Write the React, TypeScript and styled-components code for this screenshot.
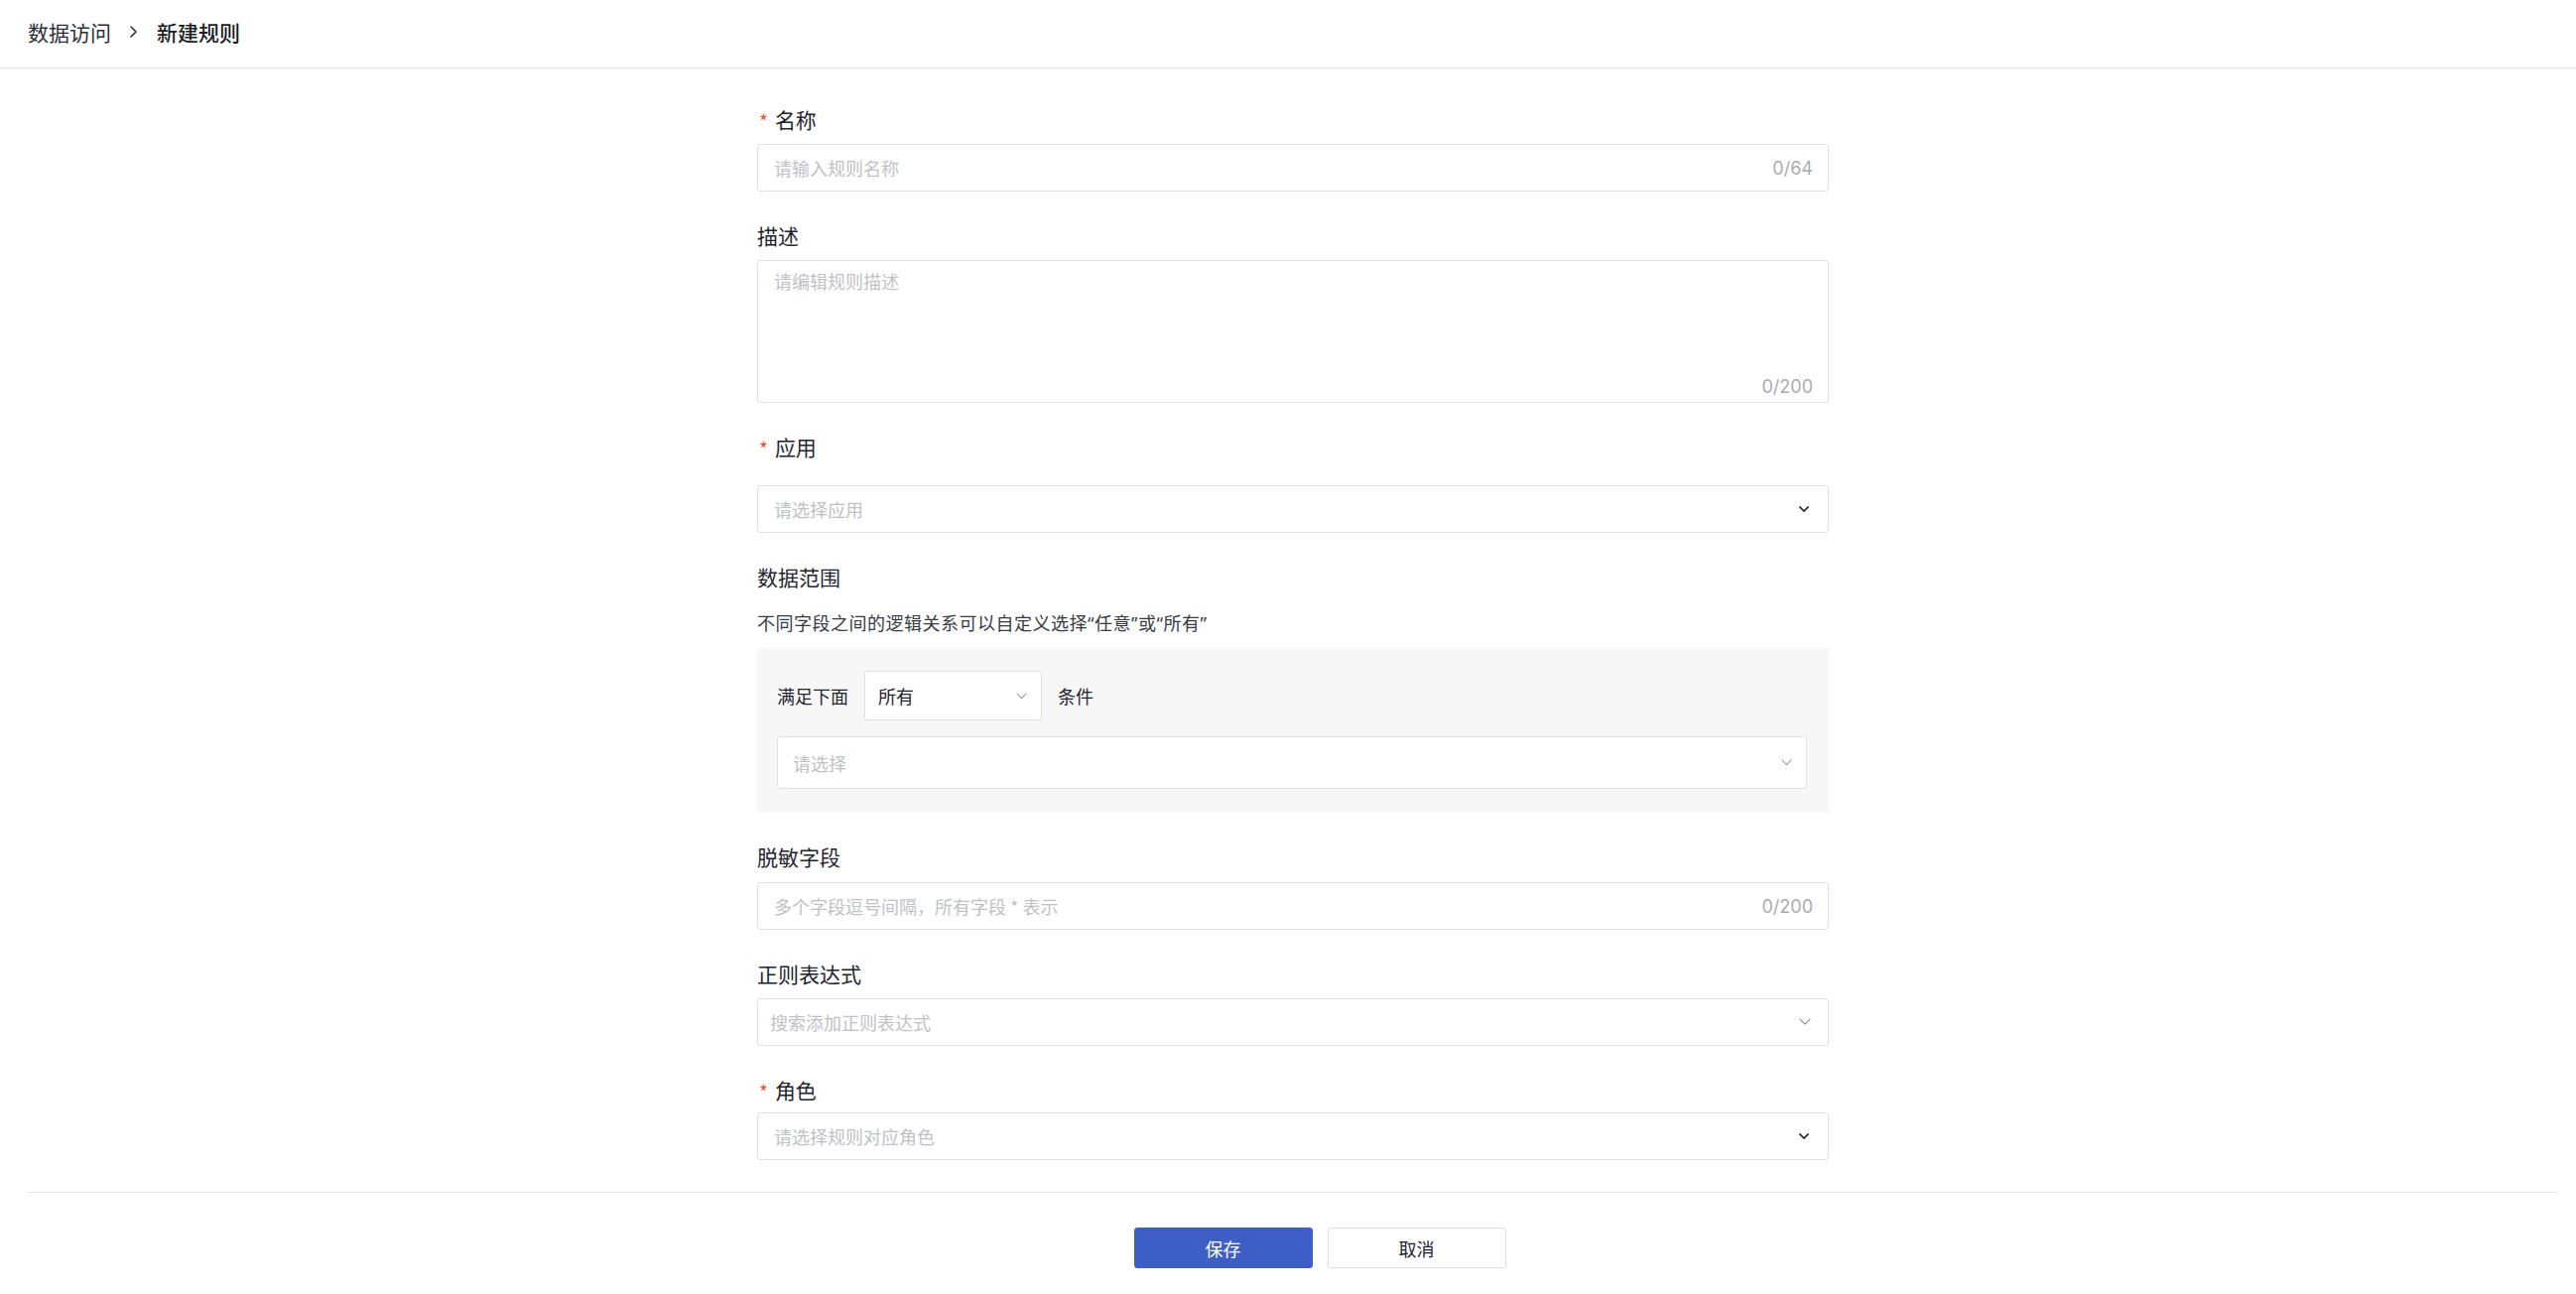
import React from "react";
import styled, { createGlobalStyle } from "styled-components";

const GlobalStyle = createGlobalStyle`
  html, body {
    margin: 0;
    padding: 0;
    background: #ffffff;
  }
  body {
    font-family: "PingFang SC", "Noto Sans CJK SC", "Noto Sans", sans-serif;
    color: #1f2329;
  }
  * {
    box-sizing: border-box;
  }
`;

const Page = styled.div`
  width: 100%;
  min-height: 1304px;
  display: flex;
  flex-direction: column;
`;

const Header = styled.header`
  height: 69px;
  display: flex;
  align-items: center;
  gap: 12px;
  padding: 0 28px 4px;
  border-bottom: 1px solid #e3e4e8;
`;

const Crumb = styled.span<{ $current?: boolean }>`
  font-size: 21px;
  line-height: 32px;
  color: ${(p) => (p.$current ? "#1a1d24" : "#2b2f38")};
  font-weight: ${(p) => (p.$current ? 500 : 400)};
`;

const CrumbSep = styled.svg`
  width: 10px;
  height: 14px;
  margin: 0 7px 0 5px;
`;

const Form = styled.main`
  width: 1080px;
  margin: 0 auto;
  padding: 37px 0 0;
  transform: translateX(5px);
  display: flex;
  flex-direction: column;
  gap: 30px;
`;

const Field = styled.section`
  display: flex;
  flex-direction: column;
`;

const Label = styled.div<{ $space?: number }>`
  height: 32px;
  display: flex;
  align-items: flex-start;
  font-size: 21px;
  line-height: 29px;
  color: #1f2430;
  margin-bottom: ${(p) => p.$space ?? 7}px;
`;

const Star = styled.span`
  color: #e2522f;
  font-size: 19px;
  line-height: 29px;
  margin: 0 7px 0 2px;
  transform: translateY(1px);
`;

const Box = styled.div<{ $h?: number }>`
  height: ${(p) => p.$h ?? 48}px;
  display: flex;
  align-items: center;
  border: 1px solid #dfe1e6;
  border-radius: 3px;
  background: #ffffff;
  padding: 0 15px 0 16px;
`;

const SelectBox = styled(Box)<{ $tail?: number }>`
  padding-right: ${(p) => p.$tail ?? 19}px;
`;

const TextInput = styled.input`
  flex: 1;
  min-width: 0;
  border: none;
  outline: none;
  background: transparent;
  font-family: inherit;
  font-size: 18px;
  color: #1f2430;
  padding: 0;
  &::placeholder {
    color: #bfc1c6;
  }
`;

const Counter = styled.span`
  font-family: Inter, "Noto Sans", sans-serif;
  font-size: 18px;
  color: #a9abb0;
  flex: none;
`;

const AreaBox = styled.div`
  height: 144px;
  display: flex;
  flex-direction: column;
  border: 1px solid #dfe1e6;
  border-radius: 3px;
  padding: 7px 15px 2px 16px;
`;

const TextArea = styled.textarea`
  flex: 1;
  resize: none;
  border: none;
  outline: none;
  font-family: inherit;
  font-size: 18px;
  line-height: 27px;
  color: #1f2430;
  padding: 0;
  &::placeholder {
    color: #bfc1c6;
  }
`;

const AreaCounter = styled(Counter)`
  align-self: flex-end;
  line-height: 27px;
`;

const Placeholder = styled.span<{ $shift?: number }>`
  flex: 1;
  font-size: 18px;
  color: #bfc1c6;
  margin-left: ${(p) => p.$shift ?? 0}px;
`;

const Value = styled.span`
  flex: 1;
  font-size: 18px;
  color: #1f2430;
`;

const Hint = styled.p`
  margin: 16px 0 11px;
  font-family: "Noto Sans", "Noto Sans CJK SC", sans-serif;
  font-size: 18px;
  line-height: 27px;
  letter-spacing: 0.5px;
  color: #363a43;
`;

const RangePanel = styled.div`
  background: #f7f7f8;
  padding: 23px 22px 24px 20px;
  display: flex;
  flex-direction: column;
  gap: 16px;
`;

const ConditionRow = styled.div`
  display: flex;
  align-items: center;
  gap: 16px;
  font-size: 18px;
  color: #1f2430;
`;

const MiniSelect = styled(Box)`
  width: 179px;
  padding: 0 14px 0 13px;
`;

const WideSelect = styled(Box)`
  padding: 0 14px 0 11px;
`;

const Footer = styled.footer`
  margin: 32px 18px 0 28px;
  border-top: 1px solid #e3e4e8;
  padding: 35px 0 0 54px;
  display: flex;
  justify-content: center;
  gap: 15px;
`;

const Button = styled.button<{ $primary?: boolean }>`
  width: 180px;
  height: 41px;
  border-radius: 3px;
  font-family: inherit;
  font-size: 18px;
  cursor: pointer;
  border: 1px solid ${(p) => (p.$primary ? "#3d5fc5" : "#dcdee3")};
  background: ${(p) => (p.$primary ? "#3d5fc5" : "#ffffff")};
  color: ${(p) => (p.$primary ? "#ffffff" : "#1f2430")};
`;

const Chevron = ({ tone = "dark", size = 10 }: { tone?: "dark" | "light"; size?: number }) => (
  <svg width={size} height={size * 0.6} viewBox="0 0 12 7" fill="none">
    <path
      d="M1 1l5 5 5-5"
      stroke={tone === "dark" ? "#2a2e37" : "#8a8f99"}
      strokeWidth={tone === "dark" ? 2 : 1.1}
      strokeLinecap="round"
      strokeLinejoin="round"
    />
  </svg>
);

const RequiredLabel = ({ text, space }: { text: string; space?: number }) => (
  <Label $space={space}>
    <Star>*</Star>
    {text}
  </Label>
);

export default function App() {
  return (
    <Page>
      <GlobalStyle />
      <Header>
        <Crumb>数据访问</Crumb>
        <CrumbSep viewBox="0 0 10 14" fill="none">
          <path d="M3 2l5 5-5 5" stroke="#2b2f38" strokeWidth="1.6" strokeLinecap="round" strokeLinejoin="round" />
        </CrumbSep>
        <Crumb $current>新建规则</Crumb>
      </Header>

      <Form>
        <Field>
          <RequiredLabel text="名称" />
          <Box>
            <TextInput placeholder="请输入规则名称" />
            <Counter>0/64</Counter>
          </Box>
        </Field>

        <Field>
          <Label>描述</Label>
          <AreaBox>
            <TextArea placeholder="请编辑规则描述" />
            <AreaCounter>0/200</AreaCounter>
          </AreaBox>
        </Field>

        <Field>
          <RequiredLabel text="应用" space={21} />
          <SelectBox>
            <Placeholder>请选择应用</Placeholder>
            <Chevron />
          </SelectBox>
        </Field>

        <Field>
          <Label $space={0}>数据范围</Label>
          <Hint>不同字段之间的逻辑关系可以自定义选择“任意”或“所有”</Hint>
          <RangePanel>
            <ConditionRow>
              <span>满足下面</span>
              <MiniSelect $h={50}>
                <Value>所有</Value>
                <Chevron tone="light" size={11} />
              </MiniSelect>
              <span>条件</span>
            </ConditionRow>
            <WideSelect $h={53}>
              <Placeholder $shift={4}>请选择</Placeholder>
              <Chevron tone="light" size={11} />
            </WideSelect>
          </RangePanel>
        </Field>

        <Field>
          <Label $space={8}>脱敏字段</Label>
          <Box>
            <TextInput placeholder="多个字段逗号间隔，所有字段 * 表示" />
            <Counter>0/200</Counter>
          </Box>
        </Field>

        <Field>
          <Label>正则表达式</Label>
          <SelectBox $tail={17}>
            <Placeholder $shift={-4}>搜索添加正则表达式</Placeholder>
            <Chevron tone="light" size={12} />
          </SelectBox>
        </Field>

        <Field>
          <RequiredLabel text="角色" space={5} />
          <SelectBox>
            <Placeholder>请选择规则对应角色</Placeholder>
            <Chevron />
          </SelectBox>
        </Field>
      </Form>

      <Footer>
        <Button $primary>保存</Button>
        <Button>取消</Button>
      </Footer>
    </Page>
  );
}
